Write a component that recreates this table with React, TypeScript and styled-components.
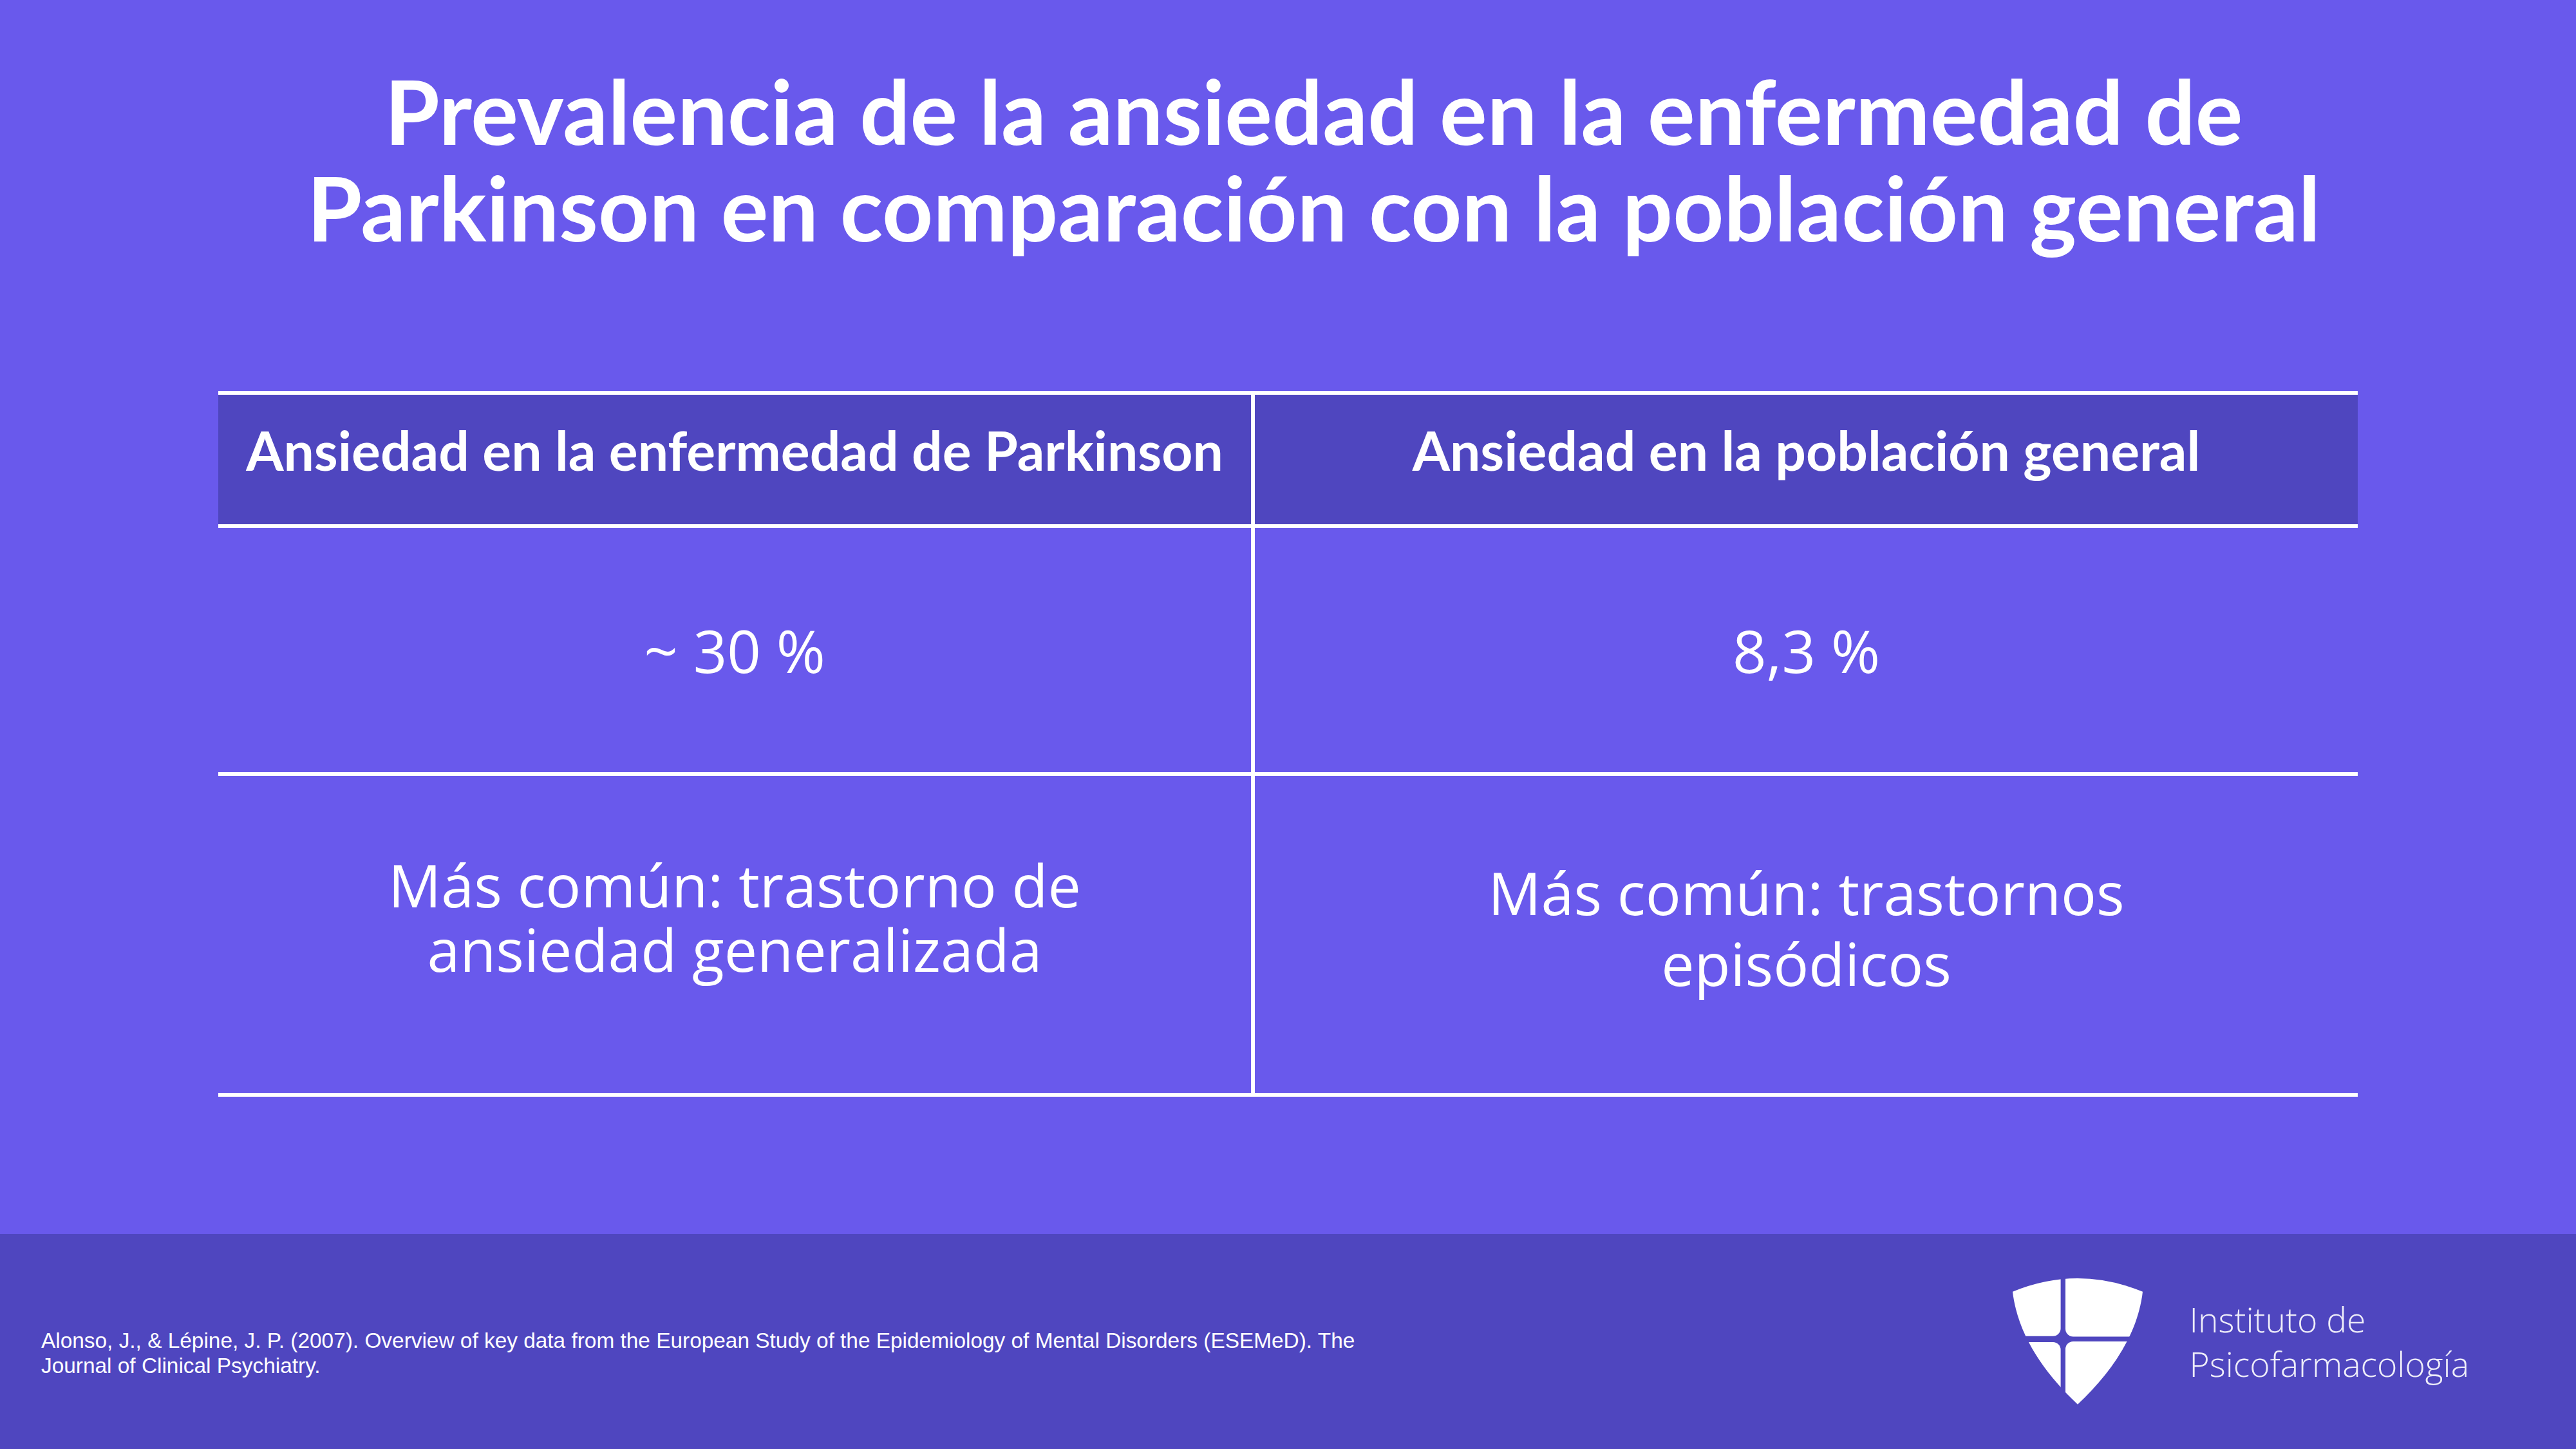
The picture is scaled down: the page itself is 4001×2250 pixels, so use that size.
import styled, { createGlobalStyle } from "styled-components";

const GlobalStyle = createGlobalStyle`
  html, body {
    margin: 0;
    padding: 0;
  }
  body {
    width: 4001px;
    height: 2250px;
    overflow: hidden;
    background: #6959ec;
  }
`;

function Shield() {
  return (
    <svg width="203" height="196" viewBox="0 0 203 196">
      <defs>
        <clipPath id="shield-clip">
          <path d="M0 20.7 Q101 -20.7 202 20.7 C194 90 150 150 101 195.7 C52 150 8 90 0 20.7 Z" />
        </clipPath>
      </defs>
      <g clipPath="url(#shield-clip)" fill="#ffffff">
        <rect x="-20" y="-20" width="94.6" height="109.7" rx="12" />
        <rect x="82" y="-20" width="160" height="110.5" rx="12" />
        <rect x="-20" y="99" width="94.6" height="120" rx="12" />
        <rect x="82" y="98" width="160" height="120" rx="12" />
      </g>
    </svg>
  );
}

function App() {
  return (
    <>
      <GlobalStyle />
      <Page>
        <Main>
          <Title>
            Prevalencia de la ansiedad en la enfermedad de
            <br />
            Parkinson en comparación con la población general
          </Title>

          <Table>
            <HeadCell>Ansiedad en la enfermedad de Parkinson</HeadCell>
            <HeadCell>Ansiedad en la población general</HeadCell>

            <ValueCell>~ 30 %</ValueCell>
            <ValueCell>8,3 %</ValueCell>

            <NoteCell $top={119} $lineHeight={100}>
              <NoteText>Más común: trastorno de ansiedad generalizada</NoteText>
            </NoteCell>
            <NoteCell $top={126} $lineHeight={110}>
              <NoteText>Más común: trastornos episódicos</NoteText>
            </NoteCell>
          </Table>
        </Main>

        <Footer>
          <Citation>
            Alonso, J., &amp; Lépine, J. P. (2007). Overview of key data from the European Study
            of the Epidemiology of Mental Disorders (ESEMeD). The Journal of Clinical Psychiatry.
          </Citation>

          <Logo>
            <Shield />
            <LogoText>
              Instituto de
              <br />
              Psicofarmacología
            </LogoText>
          </Logo>
        </Footer>
      </Page>
    </>
  );
}

const Page = styled.div`
  width: 4001px;
  height: 2250px;
  display: flex;
  flex-direction: column;
  background: #6959ec;
  color: #ffffff;
`;

const Main = styled.div`
  flex: 1;
  display: flex;
  flex-direction: column;
  align-items: center;
`;

const Title = styled.h1`
  margin: 97px 0 0 80px;
  font-family: Lato, "Liberation Sans", sans-serif;
  font-weight: 700;
  font-size: 138px;
  line-height: 150px;
  text-align: center;
  white-space: nowrap;
`;

const Table = styled.div`
  margin-top: 210px;
  display: grid;
  grid-template-columns: 1604px 1713px;
  grid-template-rows: 201px 379px 492px;
  gap: 6px;
  padding: 6px 0;
  background: #ffffff;
`;

const HeadCell = styled.div`
  display: flex;
  align-items: center;
  justify-content: center;
  padding-bottom: 28px;
  box-sizing: border-box;
  background: #4f46bf;
  font-family: Lato, "Liberation Sans", sans-serif;
  font-weight: 700;
  font-size: 84px;
  line-height: 1.2;
  white-space: nowrap;
`;

const ValueCell = styled.div`
  display: flex;
  align-items: center;
  justify-content: center;
  background: #6959ec;
  font-family: "Open Sans", "Liberation Sans", sans-serif;
  font-weight: 400;
  font-size: 92px;
`;

const NoteCell = styled.div<{ $top: number; $lineHeight: number }>`
  display: flex;
  justify-content: center;
  align-items: flex-start;
  box-sizing: border-box;
  padding-top: ${(p) => p.$top}px;
  background: #6959ec;
  font-family: "Open Sans", "Liberation Sans", sans-serif;
  font-weight: 400;
  font-size: 91.5px;
  line-height: ${(p) => p.$lineHeight}px;
`;

const NoteText = styled.div`
  max-width: 1100px;
  text-align: center;
`;

const Footer = styled.footer`
  height: 334px;
  flex-shrink: 0;
  display: flex;
  align-items: center;
  justify-content: space-between;
  padding: 0 166px 0 64px;
  background: #4f46bf;
`;

const Citation = styled.p`
  margin: 36px 0 0;
  max-width: 2060px;
  font-family: "Liberation Sans", Arial, sans-serif;
  font-size: 33.4px;
  line-height: 39px;
`;

const Logo = styled.div`
  display: flex;
  align-items: center;
  gap: 72px;
`;

const LogoText = styled.div`
  font-family: "Open Sans", "Liberation Sans", sans-serif;
  font-weight: 300;
  font-size: 53.5px;
  line-height: 69px;
  color: rgba(255, 255, 255, 0.9);
  white-space: nowrap;
`;

export default App;
